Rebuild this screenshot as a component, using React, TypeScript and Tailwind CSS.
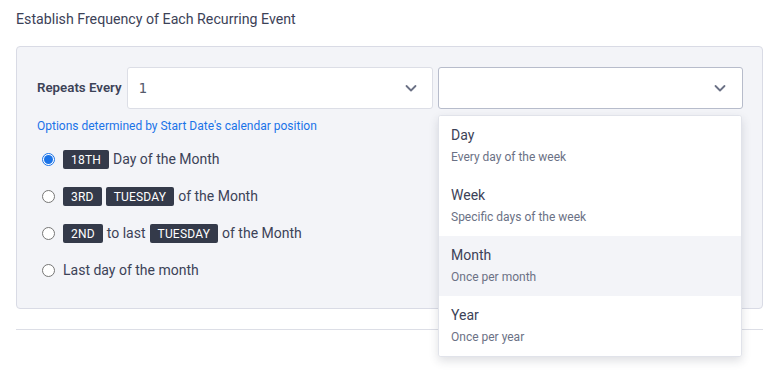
const Chevron = () => (
  <svg width="14" height="14" viewBox="0 0 14 14" fill="none">
    <path d="M2.5 5l4.5 4.5L11.5 5" stroke="#6b7185" strokeWidth="1.8" strokeLinecap="round" strokeLinejoin="round" />
  </svg>
);

const Badge = ({ children }: { children: React.ReactNode }) => (
  <span className="inline-flex h-[19px] items-center rounded-[2px] bg-[#343a4a] px-[8px] text-[12px] leading-none tracking-[0.2px] text-white">
    {children}
  </span>
);

const Radio = ({ checked }: { checked?: boolean }) => (
  <span
    className={
      checked
        ? "flex h-[13px] w-[13px] items-center justify-center rounded-full border border-[#1a73e8] bg-white"
        : "flex h-[13px] w-[13px] items-center justify-center rounded-full border border-[#767676] bg-white"
    }
  >
    {checked && <span className="h-[9px] w-[9px] rounded-full bg-[#1a73e8]" />}
  </span>
);

const options = [
  { title: "Day", sub: "Every day of the week" },
  { title: "Week", sub: "Specific days of the week" },
  { title: "Month", sub: "Once per month", active: true },
  { title: "Year", sub: "Once per year" },
];

const App = () => {
  return (
    <div className="h-[375px] w-[783px] overflow-hidden bg-white px-[16px] pt-[10px] font-['Roboto',sans-serif] text-[#3c4257]">
      <h2 className="text-[14.2px] leading-[19px] text-[#3c4257]">Establish Frequency of Each Recurring Event</h2>

      <div className="mt-[17px] h-[263px] w-[747px] rounded-[4px] border border-[#d9dbe5] bg-[#f3f4f8] pl-[20px] pr-[19px] pt-[20px]">
        <div className="flex items-center gap-[5px]">
          <span className="text-[13.3px] font-semibold text-[#3c4257]">Repeats Every</span>
          <div className="relative flex-1">
            <div className="flex h-[42px] items-center justify-between rounded-[3px] border border-[#dcdee6] bg-white pl-[11px] pr-[14px]">
              <span className="font-['DejaVu_Sans_Mono',monospace] text-[14px] text-[#555a6b]">1</span>
              <Chevron />
            </div>
          </div>
          <div className="relative w-[305px]">
            <div className="flex h-[42px] items-center justify-end rounded-[3px] border border-[#b7bccb] bg-white pr-[15px]">
              <Chevron />
            </div>
            <div className="absolute left-0 right-[1px] top-[48px] z-10 overflow-hidden rounded-[3px] border border-[#e1e3ea] bg-white shadow-[0_4px_10px_rgba(40,45,70,0.15)]">
              {options.map((o) => (
                <div
                  key={o.title}
                  className={
                    o.active
                      ? "flex h-[60px] flex-col bg-[#f3f4f8] pl-[12px] pt-[10px]"
                      : "flex h-[60px] flex-col bg-white pl-[12px] pt-[10px]"
                  }
                >
                  <span className="text-[14px] leading-[18px] text-[#3c4257]">{o.title}</span>
                  <span className="mt-[5px] text-[12px] leading-[16px] text-[#6b7185]">{o.sub}</span>
                </div>
              ))}
            </div>
          </div>
        </div>

        <p className="mt-[9px] text-[12px] leading-[16px] text-[#1a73e8]">
          Options determined by Start Date's calendar position
        </p>

        <div className="mt-[16px] flex flex-col gap-[18px] pl-[5px] text-[14px] text-[#3c4257]">
          <div className="flex h-[19px] items-center gap-[4px]">
            <span className="mr-[4px]"><Radio checked /></span>
            <Badge>18TH</Badge>
            <span>Day of the Month</span>
          </div>
          <div className="flex h-[19px] items-center gap-[4px]">
            <span className="mr-[4px]"><Radio /></span>
            <Badge>3RD</Badge>
            <Badge>TUESDAY</Badge>
            <span>of the Month</span>
          </div>
          <div className="flex h-[19px] items-center gap-[4px]">
            <span className="mr-[4px]"><Radio /></span>
            <Badge>2ND</Badge>
            <span>to last</span>
            <Badge>TUESDAY</Badge>
            <span>of the Month</span>
          </div>
          <div className="flex h-[19px] items-center gap-[4px]">
            <span className="mr-[4px]"><Radio /></span>
            <span>Last day of the month</span>
          </div>
        </div>
      </div>

      <div className="mt-[20px] h-px w-[747px] bg-[#dcdee6]" />
    </div>
  );
};

export default App;
